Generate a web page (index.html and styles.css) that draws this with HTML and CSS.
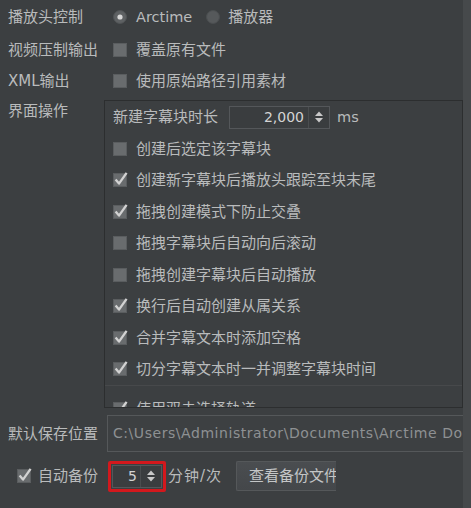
FILE: index.html
```html
<!DOCTYPE html>
<html lang="zh">
<head>
<meta charset="utf-8">
<title>设置</title>
<link rel="stylesheet" href="styles.css">
</head>
<body>
<svg class="defs" width="0" height="0" aria-hidden="true">
  <symbol id="box-off" viewBox="0 0 16 16">
    <rect x="0.5" y="1.5" width="13" height="13" fill="#696c6e" stroke="#5a5d5f"/>
  </symbol>
  <symbol id="box-on" viewBox="0 0 16 16">
    <rect x="0.5" y="1.5" width="13" height="13" fill="#696c6e" stroke="#5a5d5f"/>
    <path d="M2.6 7.6 L6 11.6 L13.6 0.8" fill="none" stroke="#d2d2d2" stroke-width="2.3" stroke-linejoin="round"/>
  </symbol>
  <symbol id="arrows" viewBox="0 0 10 16">
    <polygon points="1,7 5,2.5 9,7" fill="#c9c9c9"/>
    <polygon points="1,9 5,13.5 9,9" fill="#c9c9c9"/>
  </symbol>
</svg>

<div class="window">
  <div class="main">
    <div class="row r1">
      <div class="label">播放头控制</div>
      <div class="ctrls">
        <svg class="radio" viewBox="0 0 14 14"><circle cx="7" cy="7" r="6.5" fill="#5e6163" stroke="#505355"/><circle cx="7" cy="7" r="2.6" fill="#d6d6d6"/></svg>
        <span class="txt latin">Arctime</span>
        <svg class="radio second" viewBox="0 0 14 14"><circle cx="7" cy="7" r="6.5" fill="#56595b" stroke="#4b4e50"/></svg>
        <span class="txt">播放器</span>
      </div>
    </div>

    <div class="row r2">
      <div class="label">视频压制输出</div>
      <div class="ctrls">
        <svg class="cb"><use href="#box-off"/></svg>
        <span class="txt">覆盖原有文件</span>
      </div>
    </div>

    <div class="row r3">
      <div class="label">XML输出</div>
      <div class="ctrls">
        <svg class="cb"><use href="#box-off"/></svg>
        <span class="txt">使用原始路径引用素材</span>
      </div>
    </div>

    <div class="row rpanel">
      <div class="label plabel">界面操作</div>
      <div class="panel">
        <div class="prow first">
          <span class="txt">新建字幕块时长</span>
          <div class="spin wide">
            <span class="val">2,000</span>
            <span class="arr"><svg class="arrows"><use href="#arrows"/></svg></span>
          </div>
          <span class="txt unit latin">ms</span>
        </div>
        <div class="prow"><svg class="cb"><use href="#box-off"/></svg><span class="txt">创建后选定该字幕块</span></div>
        <div class="prow"><svg class="cb"><use href="#box-on"/></svg><span class="txt">创建新字幕块后播放头跟踪至块末尾</span></div>
        <div class="prow"><svg class="cb"><use href="#box-on"/></svg><span class="txt">拖拽创建模式下防止交叠</span></div>
        <div class="prow"><svg class="cb"><use href="#box-off"/></svg><span class="txt">拖拽字幕块后自动向后滚动</span></div>
        <div class="prow"><svg class="cb"><use href="#box-off"/></svg><span class="txt">拖拽创建字幕块后自动播放</span></div>
        <div class="prow"><svg class="cb"><use href="#box-on"/></svg><span class="txt">换行后自动创建从属关系</span></div>
        <div class="prow"><svg class="cb"><use href="#box-on"/></svg><span class="txt">合并字幕文本时添加空格</span></div>
        <div class="prow"><svg class="cb"><use href="#box-on"/></svg><span class="txt">切分字幕文本时一并调整字幕块时间</span></div>
        <div class="psep"></div>
        <div class="prow last"><svg class="cb"><use href="#box-on"/></svg><span class="txt">使用双击选择轨道</span></div>
      </div>
    </div>

    <div class="row rpath">
      <div class="label flabel">默认保存位置</div>
      <div class="field">C:\Users\Administrator\Documents\Arctime Documents</div>
    </div>

    <div class="row rbottom">
      <svg class="cb backup"><use href="#box-on"/></svg>
      <span class="txt">自动备份</span>
      <div class="mark">
        <div class="spin small">
          <span class="val">5</span>
          <span class="arr"><svg class="arrows"><use href="#arrows"/></svg></span>
        </div>
      </div>
      <span class="txt per">分钟/次</span>
      <div class="btn"><span>查看备份文件</span></div>
    </div>
  </div>
  <div class="strip"></div>
</div>
</body>
</html>
```

FILE: styles.css
```css
html, body {
  margin: 0;
  padding: 0;
  background: #3c3f41;
}

body {
  font-family: "DejaVu Sans", "Noto Sans CJK SC", sans-serif;
  font-size: 15px;
  line-height: 20px;
  color: #b9bbbc;
}

.defs {
  position: absolute;
  width: 0;
  height: 0;
  overflow: hidden;
}

.window {
  display: flex;
  width: 471px;
  height: 508px;
  overflow: hidden;
}

.main {
  width: 463px;
  flex: none;
  display: flex;
  flex-direction: column;
  overflow: hidden;
}

.strip {
  width: 8px;
  flex: none;
  background: #46494b;
}

.row {
  display: flex;
  align-items: center;
  flex: none;
  white-space: nowrap;
}

.r1 { height: 34px; }
.r2 { height: 32px; }
.r3 { height: 30px; }

.label {
  width: 96px;
  padding-left: 8px;
  flex: none;
  white-space: nowrap;
}

.ctrls {
  display: flex;
  align-items: center;
  padding-left: 9px;
}

.latin {
  font-size: 14.5px;
}

.radio {
  width: 14px;
  height: 14px;
  flex: none;
  margin-right: 9px;
}

.radio.second {
  margin-left: 14px;
  margin-right: 8px;
}

.cb {
  width: 16px;
  height: 16px;
  flex: none;
  margin-right: 7px;
  overflow: visible;
}

/* panel */
.rpanel {
  align-items: flex-start;
  margin-top: 4px;
}

.plabel {
  line-height: 22px;
}

.panel {
  box-sizing: border-box;
  width: 359px;
  height: 308px;
  border: 1px solid #2c2e2f;
  padding-left: 8px;
  overflow: hidden;
  flex: none;
}

.prow {
  display: flex;
  align-items: center;
  height: 31.5px;
  white-space: nowrap;
}

.prow.first {
  height: 32px;
}

.psep {
  height: 1px;
  margin-left: -8px;
  background: #47494b;
  margin-bottom: 7px;
}

.spin {
  box-sizing: border-box;
  display: flex;
  align-items: stretch;
  border: 1px solid #54575a;
  background: #3a3d3f;
  flex: none;
}

.spin.wide {
  width: 101px;
  height: 23px;
  margin-left: 11px;
}

.spin .val {
  flex: 1;
  text-align: right;
  font-size: 14px;
  line-height: 21px;
  color: #d4d4d4;
  padding-right: 4px;
}

.spin .arr {
  display: flex;
  align-items: center;
  justify-content: center;
  border-left: 1px solid #4a4d4f;
}

.spin.wide .arr {
  width: 20px;
}

.arrows {
  width: 10px;
  height: 16px;
}

.unit {
  margin-left: 7px;
}

/* path field */
.rpath {
  margin-top: 7px;
  height: 37px;
}

.flabel {
  width: 99px;
}

.field {
  box-sizing: border-box;
  flex: none;
  width: 420px;
  height: 37px;
  border: 1px solid #55585a;
  border-right: none;
  background: #3d4042;
  padding-left: 5px;
  font-size: 14px;
  line-height: 35px;
  letter-spacing: 0.55px;
  color: #8e9193;
  white-space: nowrap;
  overflow: hidden;
}

/* bottom row */
.rbottom {
  margin-top: 8px;
  height: 32px;
}

.cb.backup {
  margin-left: 17px;
  margin-right: 5px;
}

.mark {
  box-sizing: border-box;
  width: 58px;
  height: 31px;
  margin-left: 10px;
  border: 3px solid #d3181d;
  border-radius: 2px;
  padding: 1px 0 1px 0;
  display: flex;
  justify-content: center;
  flex: none;
}

.spin.small {
  width: 50px;
  height: 23px;
}

.spin.small .val {
  padding-right: 3px;
}

.spin.small .arr {
  width: 20px;
}

.per {
  margin-left: 2px;
  letter-spacing: 1px;
}

.btn {
  box-sizing: border-box;
  width: 100px;
  height: 30px;
  margin-left: 14px;
  border: 1px solid #55585a;
  border-right: none;
  border-radius: 2px 0 0 2px;
  background: linear-gradient(#4a4d50, #44474a);
  overflow: hidden;
  flex: none;
  padding-left: 12px;
  display: flex;
  align-items: center;
  color: #c4c6c7;
  white-space: nowrap;
}
```
